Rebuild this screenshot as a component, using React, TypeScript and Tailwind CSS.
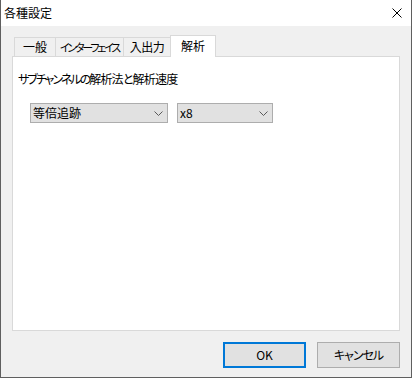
import React from 'react';

const font = "font-['Noto_Sans_CJK_JP',sans-serif] [font-feature-settings:'palt']";

function Chevron() {
  return (
    <svg width="9" height="5" viewBox="0 0 9 5" className="shrink-0">
      <path d="M0.5 0.5 L4.5 4.5 L8.5 0.5" fill="none" stroke="#5a5a5a" strokeWidth="1" />
    </svg>
  );
}

function Select({ value, width }: { value: string; width: string }) {
  return (
    <div className={`${width} h-[20px] flex items-center justify-between border border-[#adadad] bg-[#e1e1e1] pl-[2px] pr-[4px]`}>
      <span className="text-[12px] leading-none text-black">{value}</span>
      <Chevron />
    </div>
  );
}

export default function App() {
  const tabs = [
    { label: '一般', w: 'w-[42px]', t: 'text-[12px]' },
    { label: 'インターフェイス', w: 'w-[69px]', t: 'text-[11px] tracking-[-2.2px]' },
    { label: '入出力', w: 'w-[48px]', t: 'text-[12px] tracking-[-0.5px]' },
  ];

  return (
    <div className={`w-[412px] h-[378px] flex flex-col bg-[#f0f0f0] border-l border-r border-b border-[#5f5f5f] text-black ${font}`}>
      {/* Title bar */}
      <div className="h-[26px] bg-white flex items-center justify-between pl-[3px] pr-[9px]">
        <span className="text-[12px] leading-none">各種設定</span>
        <svg width="10" height="10" viewBox="0 0 10 10">
          <path d="M0.5 0.5 L9.5 9.5 M9.5 0.5 L0.5 9.5" stroke="#000" strokeWidth="1" />
        </svg>
      </div>

      {/* Body */}
      <div className="flex-1 flex flex-col pl-[11px] pt-[9px] pb-[9px]">
        {/* Tabs */}
        <div className="flex items-end h-[21px] ml-[2px]">
          {tabs.map((t, i) => (
            <div
              key={t.label}
              className={`${t.w} h-[19px] ${i > 0 ? '-ml-px' : ''} border-t border-l border-r border-[#d9d9d9] bg-[#f0f0f0] flex items-center justify-center overflow-hidden whitespace-nowrap leading-none ${t.t}`}
            >
              {t.label}
            </div>
          ))}
          <div className="w-[46px] h-[22px] -ml-px -mb-px relative z-10 border-t border-l border-r border-[#d9d9d9] bg-white flex items-center justify-center text-[12px] leading-none pb-[2px]">
            解析
          </div>
        </div>

        {/* Panel */}
        <div className="w-[388px] h-[275px] border border-[#d9d9d9] bg-white pl-[5px] pt-[14px]">
          <div className="text-[12px] leading-[16px] whitespace-nowrap">
            <span className="tracking-[-2px]">サブチャンネルの</span>
            <span className="tracking-[-0.8px]">解析法と解析速度</span>
          </div>
          <div className="flex gap-[9px] ml-[12px] mt-[16px]">
            <Select value="等倍追跡" width="w-[138px]" />
            <Select value="x8" width="w-[96px]" />
          </div>
        </div>

        {/* Buttons */}
        <div className="w-[388px] flex justify-end gap-[11px] mt-[11px]">
          <button className="w-[83px] h-[26px] border-2 border-[#0078d7] bg-[#e1e1e1] text-[12px] leading-none">
            OK
          </button>
          <button className="w-[83px] h-[26px] border border-[#adadad] bg-[#e1e1e1] text-[12px] leading-none tracking-[-1px]">
            キャンセル
          </button>
        </div>
      </div>
    </div>
  );
}
